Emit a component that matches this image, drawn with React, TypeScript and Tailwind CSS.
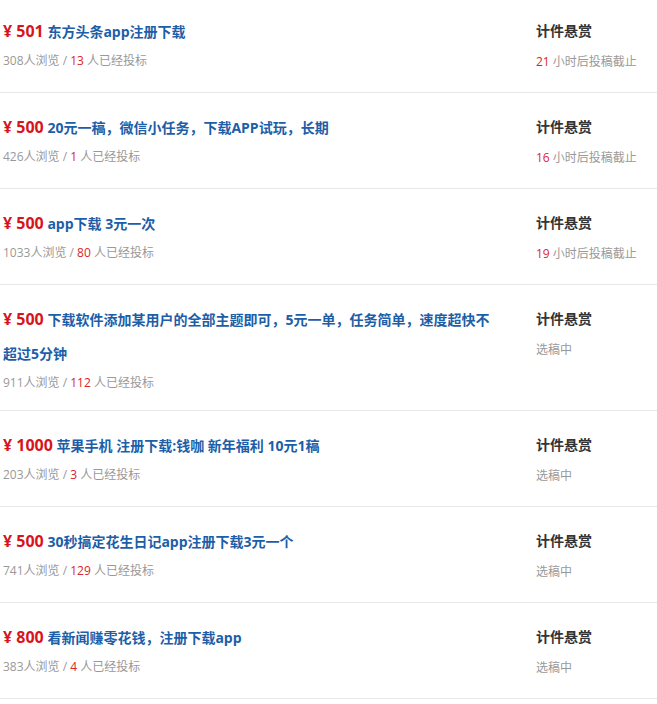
import React from "react";

type Row = {
  price: string;
  title: string;
  views: string;
  bids: string;
  hours?: string;
  status?: string;
  h: string;
};

const rows: Row[] = [
  { price: "¥ 501", title: "东方头条app注册下载", views: "308", bids: "13", hours: "21", h: "h-[96px]" },
  { price: "¥ 500", title: "20元一稿，微信小任务，下载APP试玩，长期", views: "426", bids: "1", hours: "16", h: "h-[96px]" },
  { price: "¥ 500", title: "app下载 3元一次", views: "1033", bids: "80", hours: "19", h: "h-[96px]" },
  {
    price: "¥ 500",
    title: "下载软件添加某用户的全部主题即可，5元一单，任务简单，速度超快不超过5分钟",
    views: "911",
    bids: "112",
    status: "选稿中",
    h: "h-[126px]",
  },
  { price: "¥ 1000", title: "苹果手机 注册下载:钱咖 新年福利 10元1稿", views: "203", bids: "3", status: "选稿中", h: "h-[96px]" },
  { price: "¥ 500", title: "30秒搞定花生日记app注册下载3元一个", views: "741", bids: "129", status: "选稿中", h: "h-[96px]" },
  { price: "¥ 800", title: "看新闻赚零花钱，注册下载app", views: "383", bids: "4", status: "选稿中", h: "h-[96px]" },
];

export default function App() {
  return (
    <div
      className="w-[657px] h-[704px] overflow-hidden bg-white"
      style={{ fontFamily: '"Open Sans", "Noto Sans CJK SC", sans-serif' }}
    >
      <ul className="mt-[-3px]">
        {rows.map((r, i) => (
          <li key={i} className={`flex border-b border-[#e8e8e8] ${r.h}`}>
            <div className="w-[536px] pl-[3px] pt-[17px]">
              <div className="w-[497px] text-[14px] leading-[34px] font-bold">
                <span className="text-[16px] text-[#d7141c]">{r.price}</span>{" "}
                <span className="text-[#1c5ea8]">{r.title}</span>
              </div>
              <div className="mt-[2px] text-[12px] leading-[20px] text-[#999999]">
                {r.views}人浏览 / <span className="text-[#d9262b]">{r.bids}</span> 人已经投标
              </div>
            </div>
            <div className="flex-1 pt-[17px]">
              <div className="text-[14px] leading-[34px] font-bold text-[#333333]">计件悬赏</div>
              <div className="mt-[4px] text-[12px] leading-[20px] text-[#999999]">
                {r.hours ? (
                  <>
                    <span className="text-[#d9262b]">{r.hours}</span> 小时后投稿截止
                  </>
                ) : (
                  r.status
                )}
              </div>
            </div>
          </li>
        ))}
      </ul>
    </div>
  );
}
